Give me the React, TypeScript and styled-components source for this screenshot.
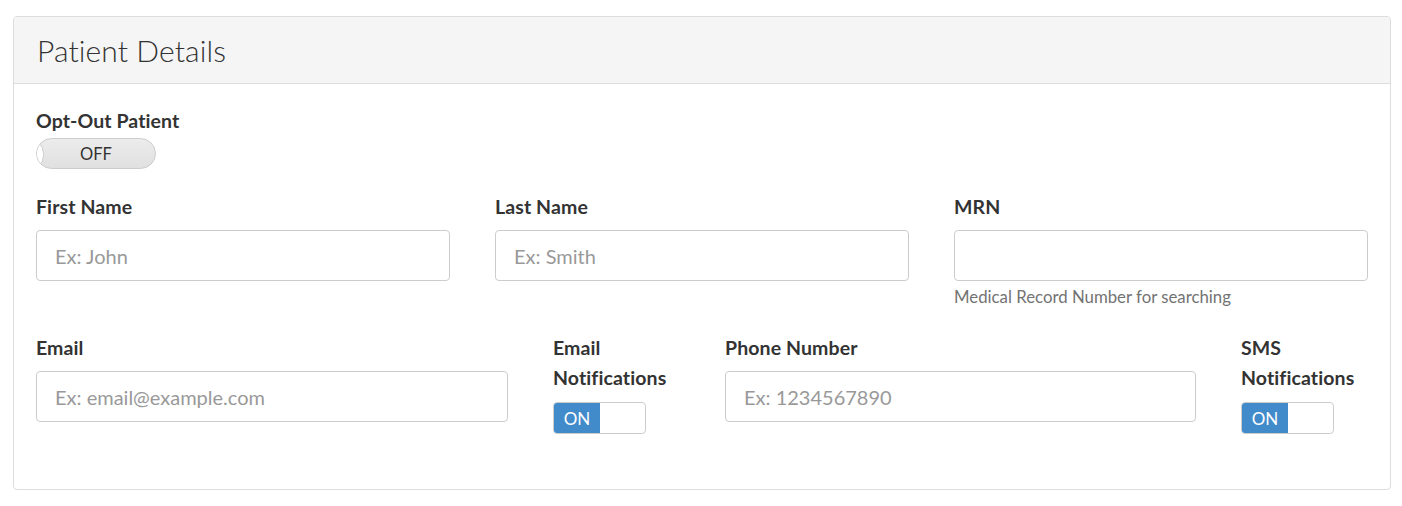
import React from 'react';
import styled, { createGlobalStyle } from 'styled-components';

const GlobalStyle = createGlobalStyle`
  body {
    margin: 0;
    background: #ffffff;
    font-family: 'Lato', 'Liberation Sans', sans-serif;
    color: #333333;
  }
`;

const Page = styled.div`
  padding: 16px 11px 16px 13px;
`;

const Panel = styled.section`
  border: 1px solid #dddddd;
  border-radius: 4px;
  background: #ffffff;
  overflow: hidden;
`;

const PanelHeading = styled.header`
  background: #f5f5f5;
  border-bottom: 1px solid #dddddd;
  height: 66px;
  display: flex;
  align-items: center;
  padding: 0 23px;
`;

const Title = styled.h3`
  margin: 0;
  font-size: 30px;
  font-weight: 300;
  color: #333333;
  letter-spacing: 0.1px;
`;

const PanelBody = styled.div`
  padding: 22px 22px 55px 22px;
`;

const Label = styled.label`
  display: block;
  font-size: 19.5px;
  font-weight: 700;
  line-height: 30px;
  letter-spacing: 0.1px;
  color: #333333;
`;

const OptOut = styled.div`
  margin-bottom: 23px;
`;

const PillSwitch = styled.div`
  position: relative;
  margin-top: 2px;
  width: 120px;
  height: 31px;
  box-sizing: border-box;
  border: 1px solid #cccccc;
  border-radius: 16px;
  background: linear-gradient(#ececec, #e0e0e0);
  display: flex;
  align-items: center;
  justify-content: center;
  font-size: 16.5px;
  color: #333333;
  overflow: hidden;
  &::before {
    content: '';
    position: absolute;
    left: -24px;
    top: -1px;
    width: 29px;
    height: 31px;
    border-radius: 16px;
    background: #ffffff;
    border: 1px solid #cccccc;
  }
`;

const Row = styled.div<{ $cols: string; $last?: boolean }>`
  display: grid;
  grid-template-columns: ${(p) => p.$cols};
  column-gap: 45px;
  align-items: start;
  margin-bottom: ${(p) => (p.$last ? '0' : '25px')};
`;

const Field = styled.div`
  display: flex;
  flex-direction: column;
`;

const Input = styled.input`
  margin-top: 8px;
  height: 51px;
  box-sizing: border-box;
  border: 1px solid #cccccc;
  border-radius: 4px;
  padding: 0 18px;
  font-family: 'Lato', 'Liberation Sans', sans-serif;
  font-size: 20px;
  color: #555555;
  outline: none;
  &::placeholder {
    color: #999999;
  }
`;

const Help = styled.span`
  margin-top: 5px;
  font-size: 16.8px;
  line-height: 22px;
  color: #737373;
`;

const Switch = styled.div`
  margin-top: 9px;
  width: 93px;
  height: 32px;
  box-sizing: border-box;
  border: 1px solid #cccccc;
  border-radius: 4px;
  overflow: hidden;
  display: flex;
  background: #ffffff;
`;

const SwitchOn = styled.span`
  width: 46px;
  background: #428bca;
  color: #ffffff;
  font-size: 17px;
  display: flex;
  align-items: center;
  justify-content: center;
`;

const OnSwitch = () => (
  <Switch>
    <SwitchOn>ON</SwitchOn>
  </Switch>
);

export default function App() {
  return (
    <Page>
      <GlobalStyle />
      <Panel>
        <PanelHeading>
          <Title>Patient Details</Title>
        </PanelHeading>
        <PanelBody>
          <OptOut>
            <Label>Opt-Out Patient</Label>
            <PillSwitch>OFF</PillSwitch>
          </OptOut>
          <Row $cols="414px 414px 414px">
            <Field>
              <Label>First Name</Label>
              <Input placeholder="Ex: John" />
            </Field>
            <Field>
              <Label>Last Name</Label>
              <Input placeholder="Ex: Smith" />
            </Field>
            <Field>
              <Label>MRN</Label>
              <Input />
              <Help>Medical Record Number for searching</Help>
            </Field>
          </Row>
          <Row $cols="472px 127px 471px 126px" $last>
            <Field>
              <Label>Email</Label>
              <Input placeholder="Ex: email@example.com" />
            </Field>
            <Field>
              <Label>Email Notifications</Label>
              <OnSwitch />
            </Field>
            <Field>
              <Label>Phone Number</Label>
              <Input placeholder="Ex: 1234567890" />
            </Field>
            <Field>
              <Label>SMS Notifications</Label>
              <OnSwitch />
            </Field>
          </Row>
        </PanelBody>
      </Panel>
    </Page>
  );
}
